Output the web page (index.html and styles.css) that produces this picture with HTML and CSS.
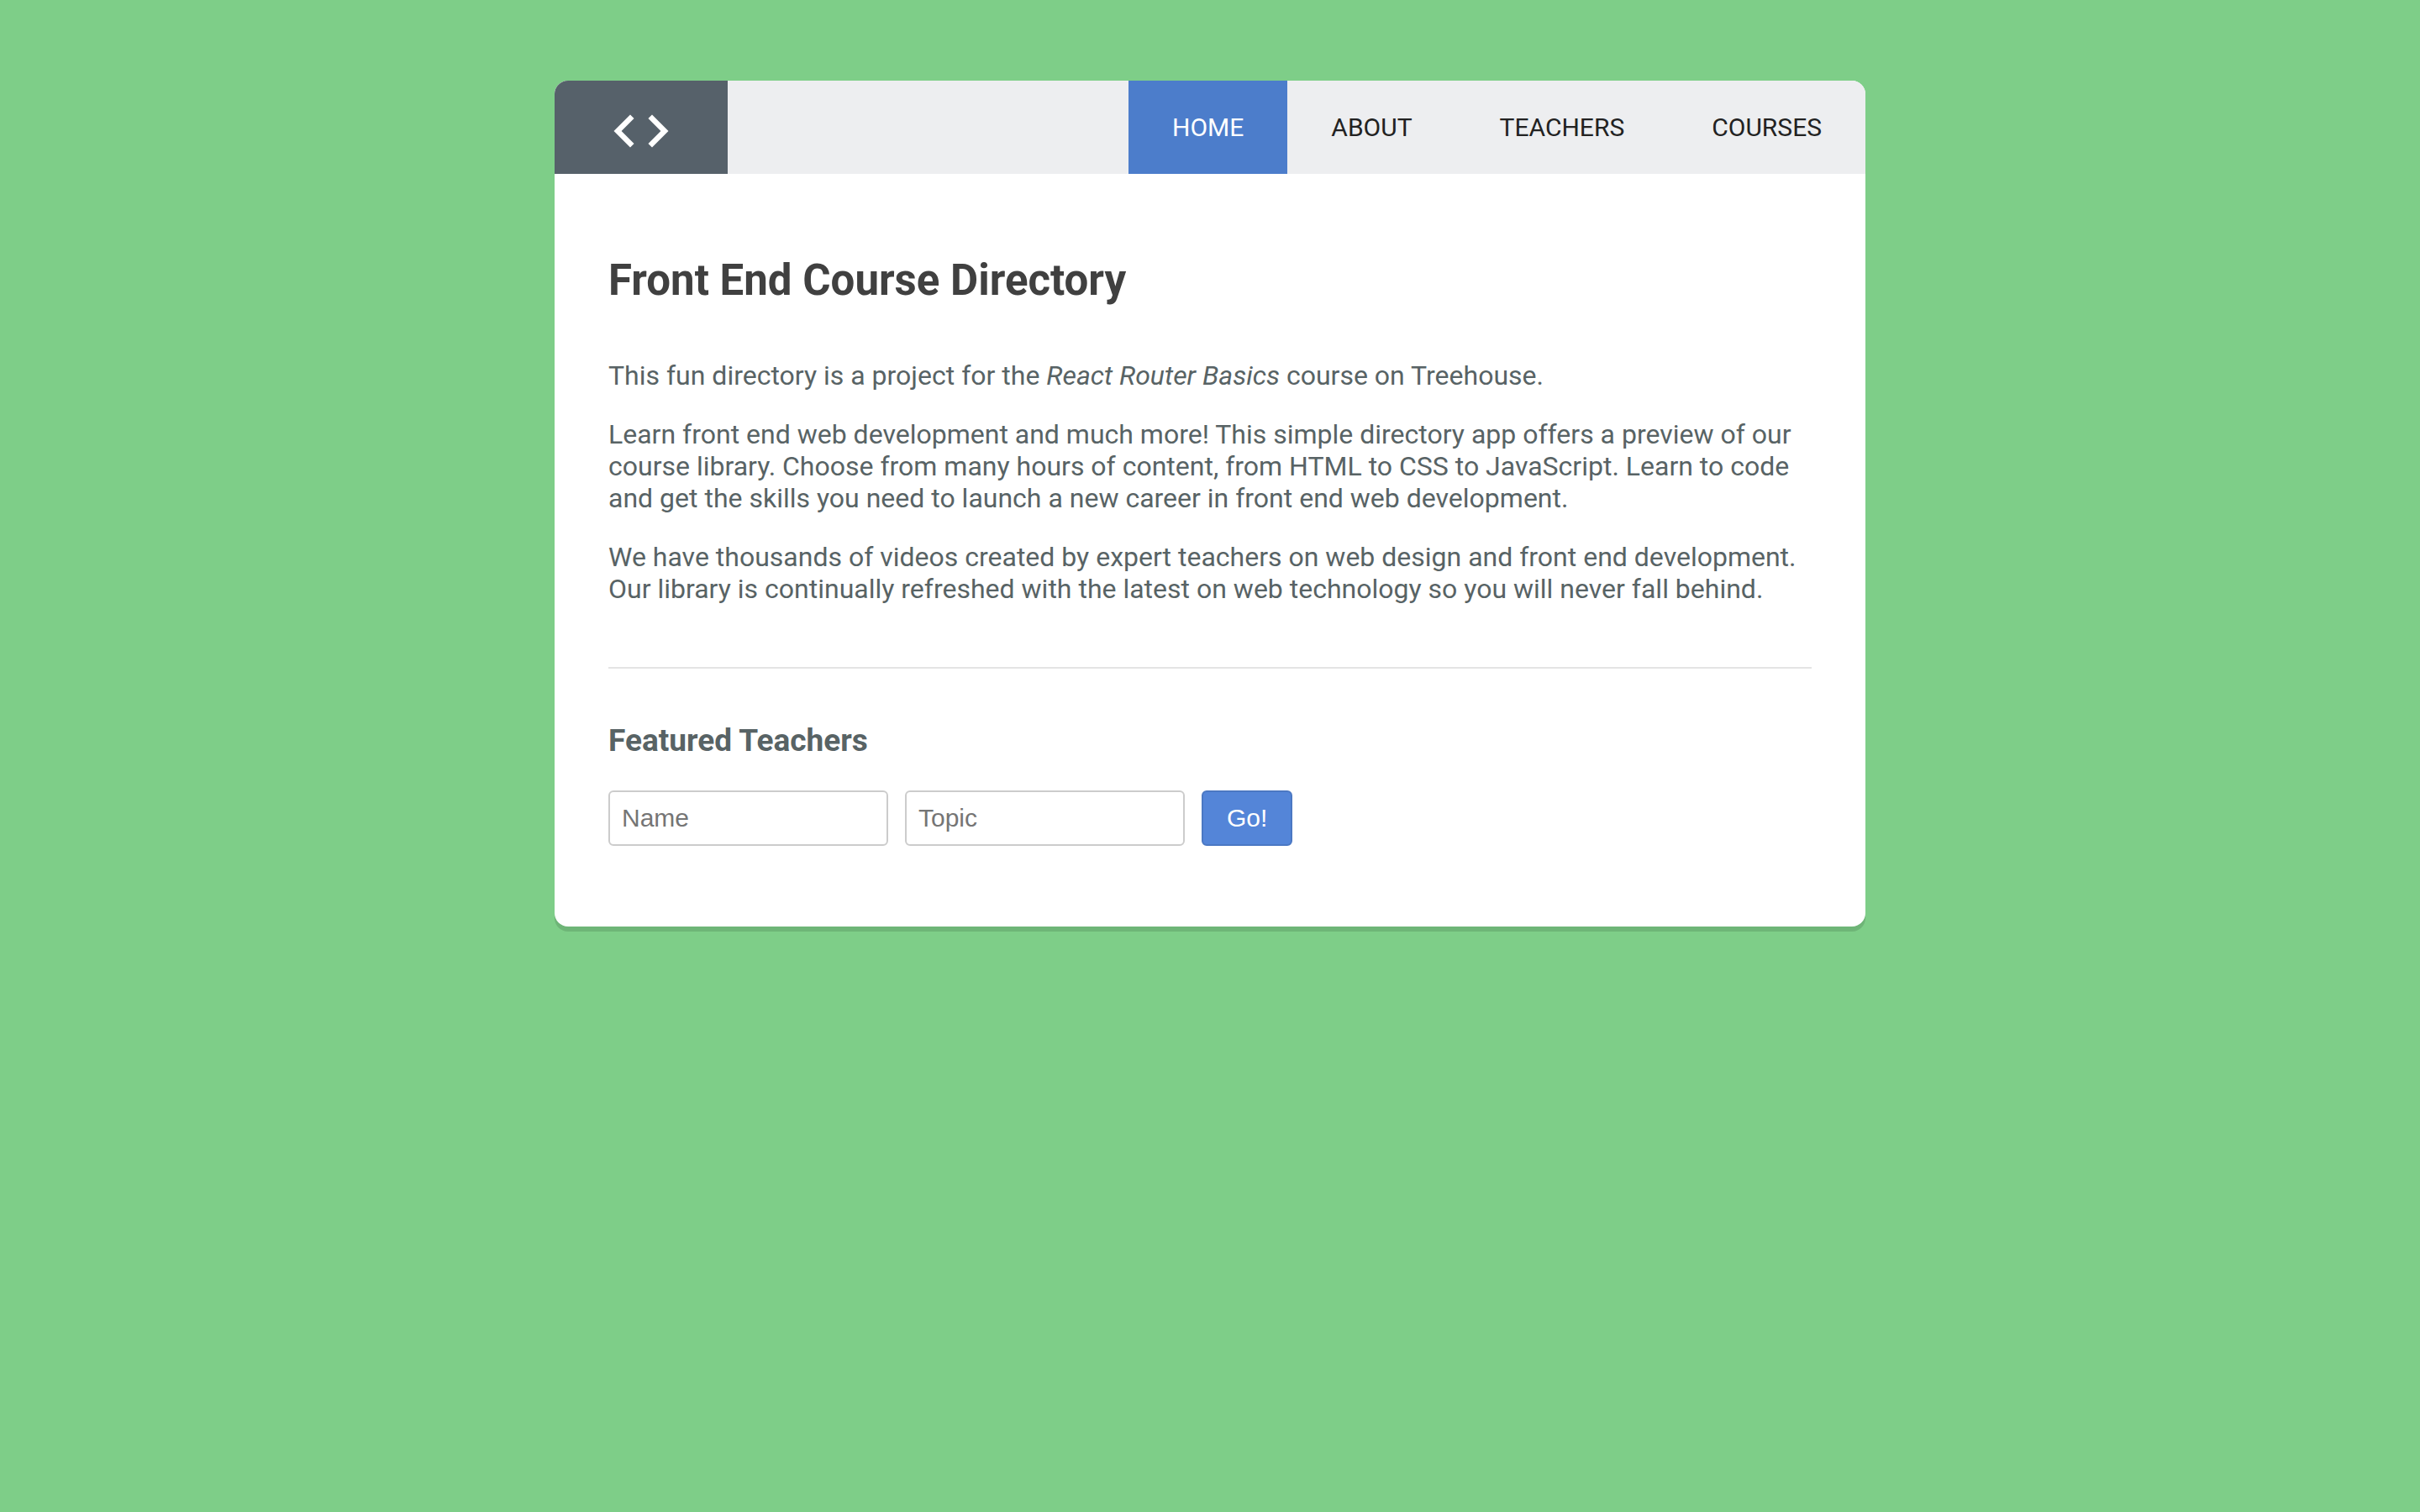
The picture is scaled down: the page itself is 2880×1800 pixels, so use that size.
FILE: index.html
```html
<!DOCTYPE html>
<html lang="en">
<head>
  <meta charset="utf-8">
  <meta name="viewport" content="width=device-width, initial-scale=1">
  <title>Front End Course Directory</title>
  <link rel="stylesheet" href="styles.css">
</head>
<body>
  <div class="container">
    <header class="header">
      <span class="logo">
        <svg class="logo-icon" viewBox="0 0 24 24" aria-hidden="true">
          <path d="M9.4 16.6L4.8 12l4.6-4.6L8 6l-6 6 6 6 1.4-1.4zm5.2 0l4.6-4.6-4.6-4.6L16 6l6 6-6 6-1.4-1.4z"/>
        </svg>
      </span>
      <nav class="main-nav">
        <a class="nav-link active" href="#home">Home</a>
        <a class="nav-link" href="#about">About</a>
        <a class="nav-link" href="#teachers">Teachers</a>
        <a class="nav-link" href="#courses">Courses</a>
      </nav>
    </header>
    <main class="main-content">
      <h1 class="title">Front End Course Directory</h1>
      <p class="text">This fun directory is a project for the <em>React Router Basics</em> course on Treehouse.</p>
      <p class="text">Learn front end web development and much more! This simple directory app offers a preview of our course library. Choose from many hours of content, from HTML to CSS to JavaScript. Learn to code and get the skills you need to launch a new career in front end web development.</p>
      <p class="text">We have thousands of videos created by expert teachers on web design and front end development. Our library is continually refreshed with the latest on web technology so you will never fall behind.</p>
      <hr class="divider">
      <h3 class="subtitle">Featured Teachers</h3>
      <form class="teacher-form">
        <input class="field" type="text" placeholder="Name" aria-label="Name">
        <input class="field" type="text" placeholder="Topic" aria-label="Topic">
        <button class="submit" type="submit">Go!</button>
      </form>
    </main>
  </div>
</body>
</html>
```
FILE: styles.css
```css
* {
  box-sizing: border-box;
}

body {
  margin: 0;
  padding: 96px 32px;
  background: #7ece88;
  color: #586365;
  font-family: Roboto, sans-serif;
  font-size: 32px;
  line-height: 38px;
}

.container {
  max-width: 1560px;
  margin: 0 auto;
  overflow: hidden;
  background: #fff;
  border-radius: 16px;
  box-shadow: 0 6px rgba(0, 0, 0, 0.12);
}

.header {
  display: flex;
  justify-content: space-between;
  background: #edeef0;
}

.logo {
  display: flex;
  padding: 21px 64px 12px;
  background: #56616a;
}

.logo-icon {
  width: 78px;
  height: 78px;
  fill: #fff;
}

.main-nav {
  display: flex;
  font-size: 30px;
}

.nav-link {
  display: flex;
  align-items: center;
  padding: 0 52px;
  color: #222;
  text-decoration: none;
  text-transform: uppercase;
}

.nav-link.active {
  background: #4c7dcb;
  color: #fff;
}

.main-content {
  padding: 96px 64px;
}

.title {
  margin: 0 0 64px;
  color: #404040;
  font-size: 51px;
  line-height: 61px;
}

.text {
  margin: 0 0 32px;
}

.divider {
  margin: 74px 0 64px;
  border: 0;
  border-top: 2px solid #e4e4e4;
}

.subtitle {
  margin: 0 0 37px;
  font-size: 37px;
  line-height: 44px;
}

.teacher-form {
  display: flex;
  flex-wrap: wrap;
  gap: 20px;
}

.field,
.submit {
  height: 66px;
  border: 2px solid #ccc;
  border-radius: 6px;
  font-family: "Liberation Sans", Arial, sans-serif;
  font-size: 30px;
}

.field {
  width: 333px;
  padding: 0 14px;
  background: #fff;
}

.field::placeholder {
  color: #757575;
}

.submit {
  padding: 0 28px;
  border-color: #4b78c3;
  background: #5485d8;
  color: #fff;
}
```
